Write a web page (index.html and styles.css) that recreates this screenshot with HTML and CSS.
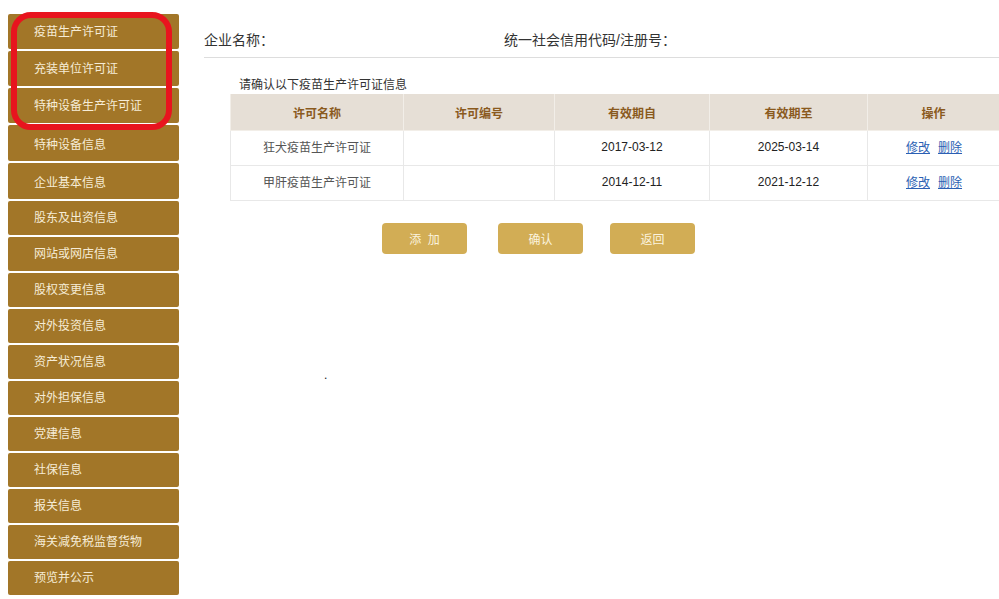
FILE: index.html
```html
<!DOCTYPE html>
<html>
	<head>
		<meta charset="UTF-8">
		<title>许可证信息</title>
		<link rel="stylesheet" href="styles.css">
	</head>
	<body>
		<div class="page">
			<ul class="side">
				<li class="tall">疫苗生产许可证</li>
				<li class="tall">充装单位许可证</li>
				<li class="tall">特种设备生产许可证</li>
				<li class="taller">特种设备信息</li>
				<li class="taller">企业基本信息</li>
				<li>股东及出资信息</li>
				<li>网站或网店信息</li>
				<li>股权变更信息</li>
				<li>对外投资信息</li>
				<li>资产状况信息</li>
				<li>对外担保信息</li>
				<li>党建信息</li>
				<li>社保信息</li>
				<li>报关信息</li>
				<li>海关减免税监督货物</li>
				<li>预览并公示</li>
			</ul>
			<div class="mark"></div>
			<div class="main">
				<div class="head">
					<span class="name">企业名称：</span>
					<span class="code">统一社会信用代码/注册号：</span>
				</div>
				<div class="box">
					<p class="tip">请确认以下疫苗生产许可证信息</p>
					<table>
						<colgroup>
							<col class="c1">
							<col class="c2">
							<col class="c3">
							<col class="c4">
							<col class="c5">
						</colgroup>
						<tr>
							<th>许可名称</th>
							<th>许可编号</th>
							<th>有效期自</th>
							<th>有效期至</th>
							<th>操作</th>
						</tr>
						<tr>
							<td>狂犬疫苗生产许可证</td>
							<td></td>
							<td class="num">2017-03-12</td>
							<td class="num">2025-03-14</td>
							<td class="ops"><a href="#">修改</a><a href="#">删除</a></td>
						</tr>
						<tr>
							<td>甲肝疫苗生产许可证</td>
							<td></td>
							<td class="num">2014-12-11</td>
							<td class="num">2021-12-12</td>
							<td class="ops"><a href="#">修改</a><a href="#">删除</a></td>
						</tr>
					</table>
					<div class="btns">
						<button class="add">添&nbsp;&nbsp;加</button>
						<button class="ok">确认</button>
						<button class="back">返回</button>
					</div>
					<div class="dot">.</div>
				</div>
			</div>
		</div>
	</body>
</html>
```

FILE: styles.css
```css
body{
	margin: 0;
	overflow: hidden;
	font-family: "Liberation Sans", "Noto Sans CJK SC", sans-serif;
	background: #fff;
}
.page{
	display: flex;
	position: relative;
	width: 999px;
	height: 599px;
	overflow: hidden;
}
.side{
	margin: 14px 0 0 8px;
	padding: 0;
	width: 171px;
	flex: none;
	list-style: none;
}
.side li{
	height: 32px;
	line-height: 31px;
	padding-top: 2px;
	margin-bottom: 2px;
	padding-left: 26px;
	background: #a27628;
	color: #f6ecd6;
	font-size: 12px;
	border-radius: 2px;
}
.side li.tall{
	height: 33px;
	line-height: 32px;
}
.side li.taller{
	height: 34px;
	line-height: 36px;
}
.mark{
	position: absolute;
	left: 11px;
	top: 12px;
	width: 149px;
	height: 106px;
	border: 6px solid #e8141e;
	border-radius: 20px;
}
.main{
	flex: none;
	width: 820px;
	padding-left: 25px;
}
.head{
	display: flex;
	height: 57px;
	border-bottom: 1px solid #ddd;
	font-size: 14px;
	color: #333;
	line-height: 80px;
}
.head .name{
	width: 300px;
}
.box{
	padding-left: 26px;
}
.tip{
	margin: 19px 0 1px 9px;
	font-size: 12px;
	color: #333;
	line-height: 16px;
}
table{
	border-collapse: collapse;
	table-layout: fixed;
	width: 769px;
	font-size: 12px;
}
.c1{ width: 173px; }
.c2{ width: 151px; }
.c3{ width: 155px; }
.c4{ width: 158px; }
.c5{ width: 132px; }
th{
	height: 36px;
	padding: 0;
	background: #e6dfd6;
	color: #8a5a1e;
	font-weight: bold;
	border: 1px solid #f2eee8;
	border-top: 0;
}
td{
	height: 31px;
	padding: 0 0 3px;
	text-align: center;
	color: #555;
	border: 1px solid #e8e8e8;
}
td.num{
	color: #222;
}
.ops{
	text-align: left;
	padding-left: 38px;
}
.ops a{
	color: #2b5fb3;
	margin-right: 8px;
}
.btns{
	display: flex;
	margin: 22px 0 0 152px;
}
.btns button{
	width: 85px;
	height: 31px;
	border: 0;
	border-radius: 4px;
	background: #d2ad55;
	color: #fbf3de;
	font-family: inherit;
	font-size: 12px;
}
.btns .ok{
	margin-left: 31px;
}
.btns .back{
	margin-left: 27px;
}
.dot{
	margin: 114px 0 0 94px;
	font-size: 12px;
	color: #222;
}
```
